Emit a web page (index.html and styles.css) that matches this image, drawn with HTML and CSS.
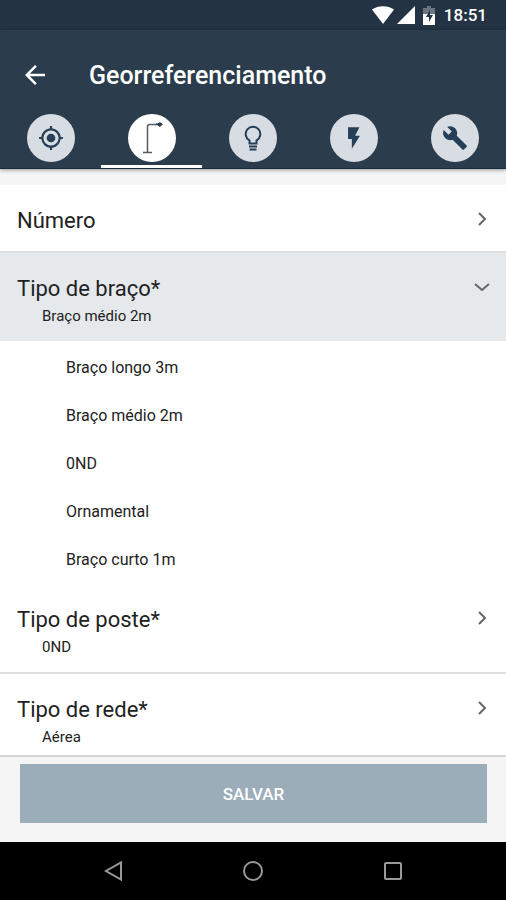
FILE: index.html
```
<!DOCTYPE html>
<html lang="pt-BR">
<head>
  <meta charset="UTF-8">
  <meta name="viewport" content="width=device-width, initial-scale=1">
  <title>Georreferenciamento</title>
  <link rel="stylesheet" href="styles.css">
</head>
<body>
<div class="status-bar">
  <svg width="22" height="18" viewBox="0 0 22 18" fill="#fff"><path d="M0 3.500C6-1 16-1 22 3.500L11 18z"/></svg>
  <svg width="18" height="18" viewBox="0 0 18 18" fill="#fff"><path d="M18 0v18H0z"/></svg>
  <svg class="battery" width="12" height="19" viewBox="0 0 12 19">
    <path d="M4 0h4v2h4v6H0V2h4z" fill="#69747f"/>
    <path d="M0 8h12v11H0z" fill="#fff"/>
    <path d="M7 4L3 11h3v5l4-7H7z" fill="#233343"/>
  </svg>
  <span>18:51</span>
</div>

<header class="header">
  <div class="toolbar">
    <button type="button" class="back-btn" aria-label="Voltar">
      <svg width="30" height="30" viewBox="0 0 24 24" fill="currentColor"><path d="M20 11H7.830l5.590-5.590L12 4l-8 8 8 8 1.410-1.410L7.830 13H20z"/></svg>
    </button>
    <h1>Georreferenciamento</h1>
  </div>
  <nav class="tabs">
    <button type="button" class="tab" aria-label="Localização">
      <span class="tab-icon">
        <svg width="26" height="26" viewBox="0 0 24 24" fill="currentColor"><path d="M12 8a4 4 0 1 0 0 8 4 4 0 0 0 0-8zm8.940 3A8.990 8.990 0 0 0 13 3.060V1h-2v2.060A8.990 8.990 0 0 0 3.060 11H1v2h2.060A8.990 8.990 0 0 0 11 20.940V23h2v-2.060A8.990 8.990 0 0 0 20.940 13H23v-2zM12 19a7 7 0 1 1 0-14 7 7 0 0 1 0 14z"/></svg>
      </span>
    </button>
    <button type="button" class="tab active" aria-label="Poste">
      <span class="tab-icon">
        <svg width="32" height="32" viewBox="0 0 32 32" fill="none" stroke="#555c64">
          <path d="M11.500 30V4.500Q11.500 2.500 14 2.500h8" stroke-width="1.500"/>
          <path d="M7 30.500h9" stroke-width="1.500"/>
          <path d="M20 2h2l1-1h2l1 1.500-2 2-2-1.500z" fill="#263b4c" stroke="#263b4c"/>
        </svg>
      </span>
    </button>
    <button type="button" class="tab" aria-label="Lâmpada">
      <span class="tab-icon">
        <svg width="26" height="26" viewBox="0 0 26 26" fill="none" stroke="currentColor" stroke-width="2">
          <path d="M9.500 18.500v-3a7.300 7.300 0 1 1 7 0v3z"/>
          <path d="M9 21.500h8M9.500 24.500h7"/>
        </svg>
      </span>
    </button>
    <button type="button" class="tab" aria-label="Energia">
      <span class="tab-icon">
        <svg width="26" height="26" viewBox="0 0 24 24" fill="currentColor"><path d="M6.500 2v11h3.500v9l7.500-12h-4.500l4-8z"/></svg>
      </span>
    </button>
    <button type="button" class="tab" aria-label="Manutenção">
      <span class="tab-icon">
        <svg width="26" height="26" viewBox="0 0 24 24" fill="currentColor"><path d="M22.700 19l-9.100-9.100c.9-2.300.4-5-1.500-6.900-2-2-5-2.400-7.400-1.300L9 6 6 9 1.600 4.700C.4 7.100.9 10.100 2.900 12.100c1.900 1.900 4.600 2.400 6.900 1.500l9.100 9.100c.4.4 1 .4 1.400 0l2.300-2.300c.5-.4.5-1.100.1-1.400z"/></svg>
      </span>
    </button>
  </nav>
</header>

<main class="list">
  <button type="button" class="row">
    <span class="row-text"><span class="row-label">Número</span></span>
    <svg class="chevron" width="24" height="24" viewBox="0 0 24 24"><path d="M9 6l6 6-6 6"/></svg>
  </button>

  <button type="button" class="row open" aria-expanded="true">
    <span class="row-text">
      <span class="row-label">Tipo de braço*</span>
      <span class="row-value">Braço médio 2m</span>
    </span>
    <svg class="chevron" width="24" height="24" viewBox="0 0 24 24"><path d="M5 9l7 6 7-6"/></svg>
  </button>
  <div class="options">
    <button type="button" class="option">Braço longo 3m</button>
    <button type="button" class="option">Braço médio 2m</button>
    <button type="button" class="option">0ND</button>
    <button type="button" class="option">Ornamental</button>
    <button type="button" class="option">Braço curto 1m</button>
  </div>

  <button type="button" class="row">
    <span class="row-text">
      <span class="row-label">Tipo de poste*</span>
      <span class="row-value">0ND</span>
    </span>
    <svg class="chevron" width="24" height="24" viewBox="0 0 24 24"><path d="M9 6l6 6-6 6"/></svg>
  </button>

  <button type="button" class="row">
    <span class="row-text">
      <span class="row-label">Tipo de rede*</span>
      <span class="row-value">Aérea</span>
    </span>
    <svg class="chevron" width="24" height="24" viewBox="0 0 24 24"><path d="M9 6l6 6-6 6"/></svg>
  </button>
</main>

<footer class="footer">
  <button type="button" class="save-btn">SALVAR</button>
</footer>

<nav class="nav-bar">
  <button type="button" aria-label="Voltar"><svg width="24" height="24" viewBox="0 0 24 24"><path d="M20 3.500v17L5 12z"/></svg></button>
  <button type="button" aria-label="Início"><svg width="24" height="24" viewBox="0 0 24 24"><circle cx="12" cy="12" r="9"/></svg></button>
  <button type="button" aria-label="Recentes"><svg width="24" height="24" viewBox="0 0 24 24"><rect x="4" y="4" width="16" height="16" rx="1"/></svg></button>
</nav>
</body>
</html>
```
FILE: styles.css
```
* { box-sizing: border-box; }
html, body { height: 100%; margin: 0; }
body { display: flex; flex-direction: column; background: #f5f5f5; color: #222; font-family: Roboto, "Liberation Sans", sans-serif; }
button { margin: 0; padding: 0; border: none; background: none; color: inherit; font: inherit; cursor: pointer; }
svg { display: block; flex: none; }

/* status bar */
.status-bar { display: flex; align-items: center; justify-content: flex-end; gap: 3px; height: 30px; padding: 0 19px 0 0; background: #233343; color: #fff; font-size: 17px; font-weight: 500; }
.battery { margin: 0 6px 0 5px; }

/* header */
.header { background: #2b3d4d; color: #fff; border-bottom: 1px solid #142d43; box-shadow: 0 1px 4px rgba(0,0,0,0.4); }
.toolbar { display: flex; align-items: center; gap: 39px; height: 80px; padding: 10px 20px 0; }
.toolbar h1 { margin: 0; font-size: 25px; font-weight: 500; }
.tabs { display: flex; }
.tab { flex: 1; display: flex; justify-content: center; padding: 4px 0 3px; border-bottom: 3px solid transparent; }
.tab.active { border-bottom-color: #fff; }
.tab-icon { display: flex; align-items: center; justify-content: center; width: 48px; height: 48px; border-radius: 50%; background: #d8dce3; color: #263f58; }
.tab.active .tab-icon { background: #fff; }

/* list */
.list { flex: 1; min-height: 0; margin-top: 16px; overflow: hidden; background: #fff; }
.row { display: flex; align-items: flex-start; justify-content: space-between; width: 100%; padding: 22px 12px 16px 17px; border-bottom: 2px solid #dedede; text-align: left; }
.row.open { background: #e5e9ec; border-bottom: none; }
.row-text { display: flex; flex-direction: column; gap: 4px; }
.row-label { font-size: 22px; line-height: 28px; }
.row-value { padding-left: 25px; font-size: 15px; line-height: 18px; }
.chevron { fill: none; stroke: #666; stroke-width: 2; }
.options { padding-top: 3px; }
.option { display: block; width: 100%; padding-left: 66px; font-size: 16px; line-height: 48px; text-align: left; }

/* footer */
.footer { padding: 7px 19px 19px 20px; border-top: 2px solid #d4d4d4; }
.save-btn { display: block; width: 100%; height: 59px; background: #9badb9; color: #fff; font-size: 17px; font-weight: 500; }

/* android navigation */
.nav-bar { display: flex; justify-content: center; gap: 116px; padding: 17px 0; background: #000; }
.nav-bar svg { fill: none; stroke: #999; stroke-width: 2; }
```
